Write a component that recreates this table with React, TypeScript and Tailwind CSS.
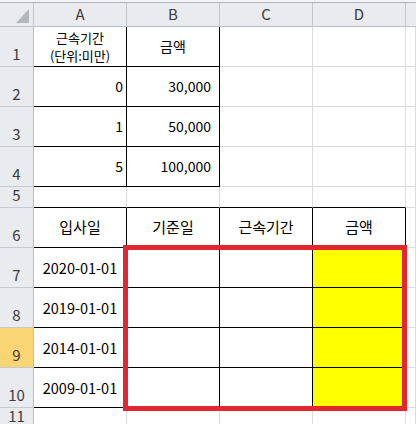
import type { ReactNode } from 'react';

const font = { fontFamily: '"Noto Sans CJK KR", "Noto Sans", sans-serif' };

type CellProps = {
  w: string;
  children?: ReactNode;
  align?: 'left' | 'center' | 'right';
  r?: boolean;
  b?: boolean;
  yellow?: boolean;
  extra?: string;
};

function Cell({ w, children, align = 'center', r, b, yellow, extra = '' }: CellProps) {
  const justify =
    align === 'right' ? 'justify-end text-right' : align === 'left' ? 'justify-start' : 'justify-center text-center';
  return (
    <div
      className={`${w} shrink-0 h-full flex items-center border-r border-b ${justify} ${
        r ? 'border-r-black' : 'border-r-[#dadcdd]'
      } ${b ? 'border-b-black' : 'border-b-[#dadcdd]'} ${yellow ? 'bg-[#ffff00]' : 'bg-white'} ${extra}`}
    >
      {children}
    </div>
  );
}

function RowHead({ n, active, short }: { n: number; active?: boolean; short?: boolean }) {
  return (
    <div
      className={`w-[34px] shrink-0 h-full flex justify-center border-r border-b border-r-[#b9bdc3] border-b-[#c6cad0] text-[15px] text-[#3c3c3c] ${
        short ? 'items-center pb-[4px]' : 'items-end pb-[1px]'
      } ${active ? 'bg-[#f9d673]' : 'bg-[#e9ebee]'}`}
    >
      {n}
    </div>
  );
}

const W = ['w-[93px]', 'w-[93px]', 'w-[93px]', 'w-[93px]'];

export default function App() {
  const dates = ['2020-01-01', '2019-01-01', '2014-01-01', '2009-01-01'];
  const table1 = [
    ['0', '30,000'],
    ['1', '50,000'],
    ['5', '100,000'],
  ];

  return (
    <div className="relative w-[416px] h-[424px] overflow-hidden bg-white text-black" style={font}>
      {/* top strip */}
      <div className="h-[2px] bg-[#f1f2f4]" />

      {/* column headers */}
      <div className="flex h-[25px] border-t border-b border-t-[#b0b4ba] border-b-[#bfc3c9] bg-[#e9ebee] text-[15px] text-[#3c3c3c]">
        <div className="relative w-[34px] shrink-0 border-r border-[#c3c7cc]">
          <svg className="absolute left-[16px] top-[6px]" width="13" height="14" viewBox="0 0 13 14">
            <polygon points="13,0 13,14 0,14" fill="#b4b8bd" />
          </svg>
        </div>
        {['A', 'B', 'C', 'D'].map((c) => (
          <div key={c} className="w-[93px] shrink-0 flex items-center justify-center border-r border-[#c3c7cc]">
            {c}
          </div>
        ))}
        <div className="flex-1" />
      </div>

      {/* row 1 */}
      <div className="flex h-[40px]">
        <RowHead n={1} />
        <Cell w={W[0]} r b>
          <div className="text-[13px] leading-[18px] pt-[1px]">
            근속기간
            <br />
            (단위:미만)
          </div>
        </Cell>
        <Cell w={W[1]} r b extra="text-[14px]">
          금액
        </Cell>
        <Cell w={W[2]} />
        <Cell w={W[3]} />
        <Cell w="flex-1" />
      </div>

      {/* rows 2-4 */}
      {table1.map(([a, b], i) => (
        <div key={a} className="flex h-[40px] text-[14px]">
          <RowHead n={i + 2} />
          <Cell w={W[0]} align="right" r b extra="pr-[3px]">
            {a}
          </Cell>
          <Cell w={W[1]} align="right" r b extra="pr-[8px]">
            {b}
          </Cell>
          <Cell w={W[2]} />
          <Cell w={W[3]} />
          <Cell w="flex-1" />
        </div>
      ))}

      {/* row 5 */}
      <div className="flex h-[21px]">
        <RowHead n={5} short />
        <Cell w={W[0]} b />
        <Cell w={W[1]} b />
        <Cell w={W[2]} b />
        <Cell w={W[3]} b />
        <Cell w="flex-1" />
      </div>

      {/* row 6 */}
      <div className="flex h-[40px] text-[15px]">
        <RowHead n={6} />
        <Cell w={W[0]} r b>입사일</Cell>
        <Cell w={W[1]} r b>기준일</Cell>
        <Cell w={W[2]} r b>근속기간</Cell>
        <Cell w={W[3]} r b>금액</Cell>
        <Cell w="flex-1" />
      </div>

      {/* rows 7-10 */}
      {dates.map((d, i) => (
        <div key={d} className="flex h-[40px] text-[14.5px]">
          <RowHead n={i + 7} active={i === 2} />
          <Cell w={W[0]} r b>
            {d}
          </Cell>
          <Cell w={W[1]} r b />
          <Cell w={W[2]} r b />
          <Cell w={W[3]} r b yellow />
          <Cell w="flex-1" />
        </div>
      ))}

      {/* row 11 */}
      <div className="flex h-[21px]">
        <RowHead n={11} short />
        <Cell w={W[0]} />
        <Cell w={W[1]} />
        <Cell w={W[2]} />
        <Cell w={W[3]} />
        <Cell w="flex-1" />
      </div>

      {/* selection outline */}
      <div className="absolute left-[123px] top-[245px] w-[284px] h-[166px] border-[5px] border-[#e42630] pointer-events-none" />
    </div>
  );
}
